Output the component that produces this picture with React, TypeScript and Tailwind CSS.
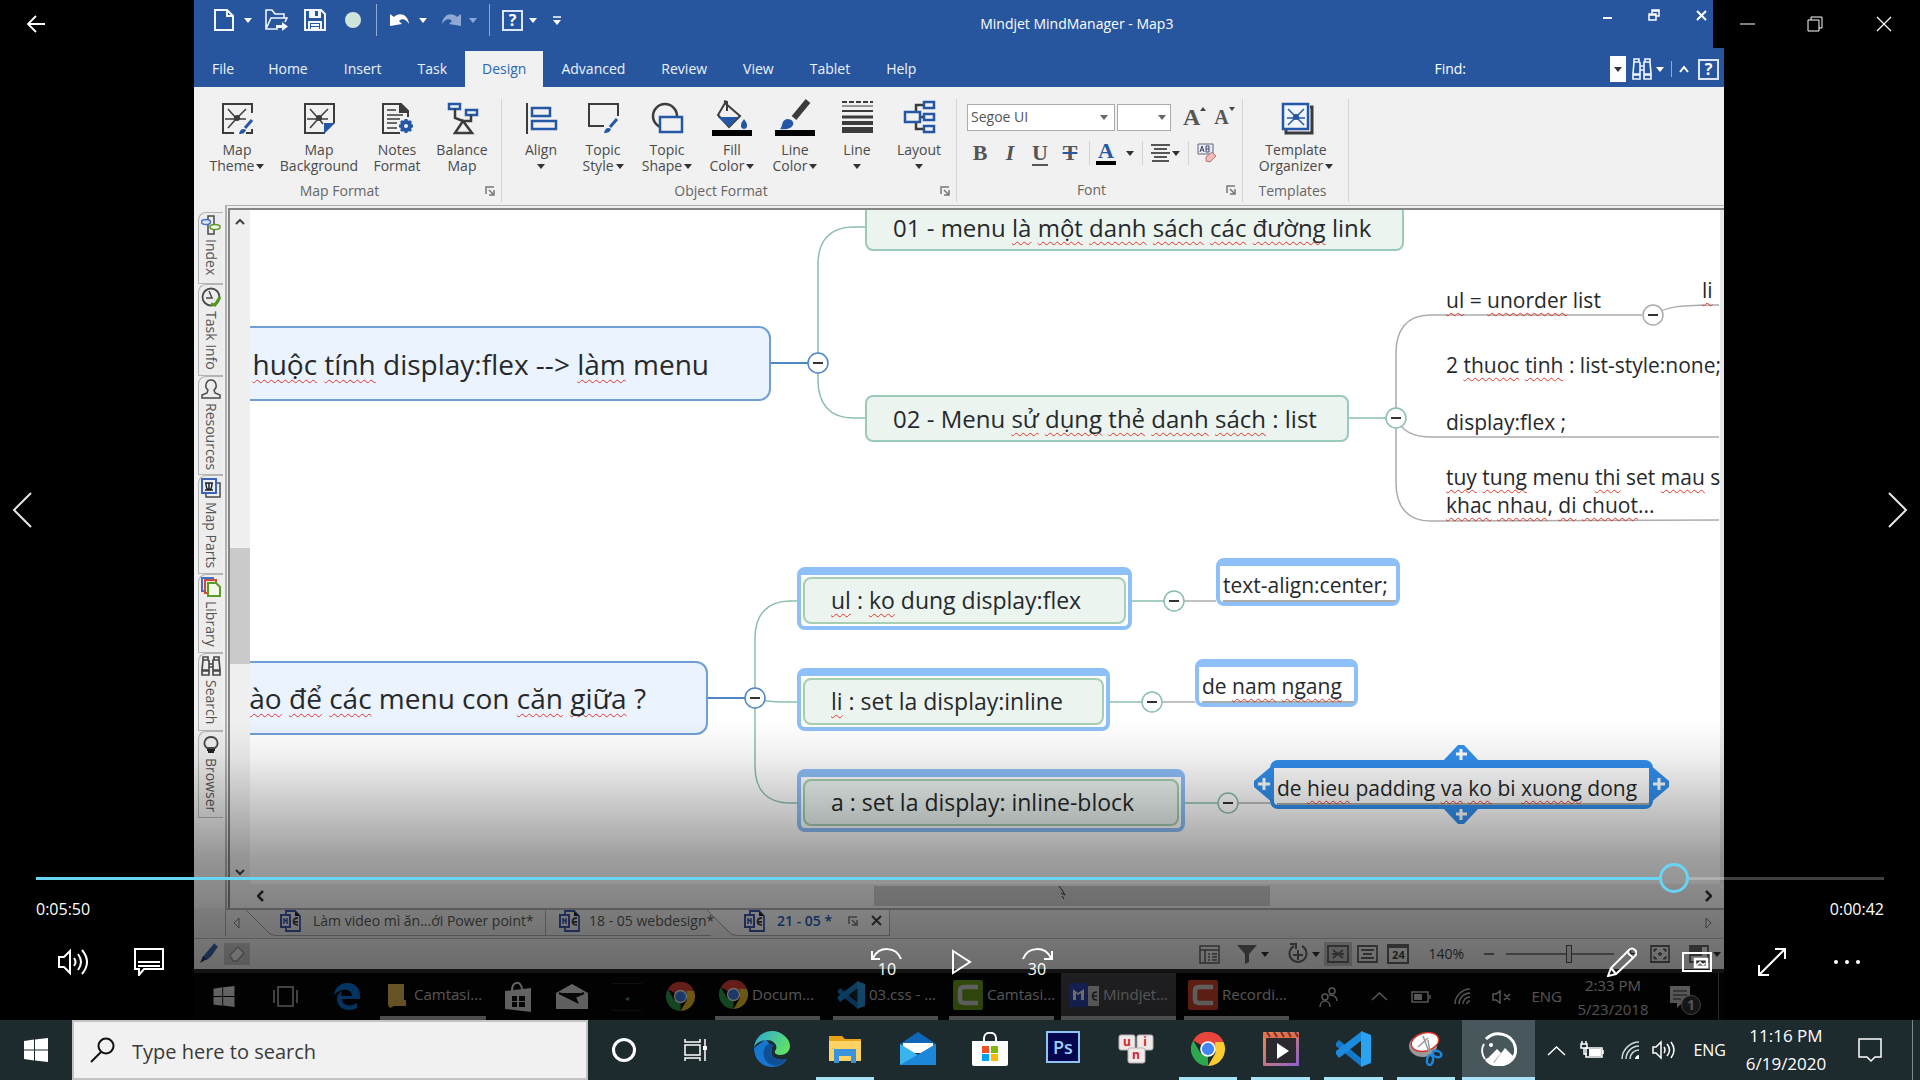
import React from "react";

type Kids = { children?: React.ReactNode };

function Svg({ w, h, box, children, cls = "" }: Kids & { w: number; h: number; box?: string; cls?: string }) {
  return (
    <svg width={w} height={h} viewBox={box ?? `0 0 ${w} ${h}`} fill="none" className={`shrink-0 ${cls}`} aria-hidden="true">
      {children}
    </svg>
  );
}

function Caret({ cls = "text-[#333]" }: { cls?: string }) {
  return (
    <Svg w={8} h={5} cls={cls}>
      <path d="M0 0h8L4 5z" fill="currentColor" />
    </Svg>
  );
}

function Bad({ children }: Kids) {
  return (
    <span className="underline decoration-[#e0352b] decoration-wavy decoration-1 underline-offset-4 [text-decoration-skip-ink:none]">
      {children}
    </span>
  );
}

/* ---------- Title bar and menu ---------- */

const WHITE = "#f2f6ff";

function TitleBar() {
  return (
    <div className="flex h-[51px] pl-3">
      <div className="flex h-10 basis-[51%] items-center">
        <button className="flex w-9 justify-center" aria-label="New">
          <Svg w={20} h={22}>
            <path d="M1 1h12l6 6v14H1zM13 1v6h6" stroke={WHITE} strokeWidth="2" />
          </Svg>
        </button>
        <button className="flex w-3 justify-center" aria-label="New options"><Caret cls="text-white" /></button>
        <button className="ml-[2px] flex w-10 justify-center" aria-label="Open">
          <Svg w={23} h={22}>
            <path d="M13 20H1V1h6l3 4h9v4M1 20L6 9h16l-2 4" stroke={WHITE} strokeWidth="1.6" />
            <path d="M11 16h6v-3l6 4.500-6 4.500v-3h-6z" fill={WHITE} />
          </Svg>
        </button>
        <button className="flex w-[37px] justify-center" aria-label="Save">
          <Svg w={22} h={22}>
            <path d="M1 1h16l4 4v16H1z" stroke={WHITE} strokeWidth="2" />
            <path d="M5 1h12v8H5z" fill={WHITE} />
            <path d="M11 2h3v5h-3z" fill="#26559e" />
            <path d="M5 21v-8h12v8M7 16h8M7 19h8" stroke={WHITE} strokeWidth="2" />
          </Svg>
        </button>
        <button className="flex w-[39px] justify-center" aria-label="Status">
          <span className="size-4 rounded-full bg-[#cfe5dc]" />
        </button>
        <span className="ml-1 h-8 w-px bg-[#8fa9d4]" />
        <button className="ml-3 flex w-5 justify-center" aria-label="Undo">
          <Svg w={19} h={14}>
            <path d="M0 13V1l4 3C9-1 18 1 19 11c-3-5-7-6-10-3l3 3z" fill="#fff" />
          </Svg>
        </button>
        <button className="ml-[6px] flex w-4 justify-center" aria-label="Undo options"><Caret cls="text-white" /></button>
        <button className="ml-[10px] flex w-5 justify-center" aria-label="Redo">
          <Svg w={19} h={14}>
            <path d="M19 13V1l-4 3C10-1 1 1 0 11c3-5 7-6 10-3l-3 3z" fill="#8fa9d4" />
          </Svg>
        </button>
        <button className="ml-1 flex w-4 justify-center" aria-label="Redo options"><Caret cls="text-[#8fa9d4]" /></button>
        <span className="ml-2 h-8 w-px bg-[#8fa9d4]" />
        <button className="ml-3 flex size-[21px] items-center justify-center border-2 border-[#dbe6fa] text-base font-bold text-white" aria-label="Help">?</button>
        <button className="ml-1 flex w-3 justify-center" aria-label="Help options"><Caret cls="text-white" /></button>
        <button className="ml-3 flex w-3 justify-center" aria-label="Customize toolbar">
          <Svg w={8} h={9}><path d="M0 1h8" stroke="#fff" strokeWidth="1.500" /><path d="M0 4h8L4 9z" fill="#fff" /></Svg>
        </button>
      </div>
      <h1 className="flex h-12 items-center text-sm text-white">Mindjet MindManager - Map3</h1>
      <div className="flex h-[30px] flex-1 items-center justify-end gap-9 pr-[17px]">
        <button aria-label="Minimize map window"><Svg w={9} h={10}><path d="M0 8h9" stroke="#fff" strokeWidth="2" /></Svg></button>
        <button aria-label="Restore map window">
          <Svg w={12} h={12}><path d="M4 4V1h7v6H8M1 5h7v6H1zM1 6h7M4 2h7" stroke="#fff" strokeWidth="1.500" /></Svg>
        </button>
        <button aria-label="Close map window"><Svg w={11} h={11}><path d="M1 1l9 9M10 1l-9 9" stroke="#fff" strokeWidth="2" /></Svg></button>
      </div>
    </div>
  );
}

const MENUS = ["Home", "Insert", "Task", "Design", "Advanced", "Review", "View", "Tablet", "Help"];

function MenuBar() {
  return (
    <div className="flex h-9 items-stretch justify-between">
      <nav className="flex">
        <button className="pr-4 pl-[18px] text-sm text-[#eef3fc]">File</button>
        {MENUS.map((m) => (
          <button key={m} className={m === "Design" ? "bg-[#f1f1f1] px-[17px] text-sm text-[#2a66b8]" : "px-[18px] text-sm text-[#eef3fc]"}>
            {m}
          </button>
        ))}
      </nav>
      <div className="flex items-center pr-[5px]">
        <label htmlFor="find" className="text-sm text-white">Find:</label>
        <input id="find" className="h-6 w-36 bg-transparent px-2 text-sm text-white outline-none" />
        <button className="flex h-[26px] w-4 items-center justify-center bg-white" aria-label="Find history"><Caret /></button>
        <button className="ml-[6px]" aria-label="Search map">
          <Svg w={20} h={22}>
            <path d="M2 1h5v3H2zM13 1h5v3h-5zM2 4L1 16h7V4M13 4h-1v12h7L18 4M1 17h7v4H1zM12 17h7v4h-7zM8 8h4M8 12h4" stroke={WHITE} strokeWidth="1.600" />
          </Svg>
        </button>
        <span className="ml-1 flex"><Caret cls="text-white" /></span>
        <span className="mx-[7px] h-4 w-px bg-[#8fa9d4]" />
        <button aria-label="Collapse ribbon"><Svg w={10} h={8}><path d="M1 7l4-5 4 5" stroke="#fff" strokeWidth="2" /></Svg></button>
        <button className="ml-[9px] flex size-[21px] items-center justify-center border-2 border-[#dbe6fa] text-base font-bold text-white" aria-label="Help topics">?</button>
      </div>
    </div>
  );
}

/* ---------- Ribbon ---------- */

const K = "#3c3c3c";
const B = "#2557a7";

function RibbonIcon({ name }: { name: string }) {
  return (
    <Svg w={42} h={38} box="0 0 42 38">
      {name === "theme" && (
        <g transform="translate(6 4)">
          <path d="M30 10V1H1v29h11M24 30h6v-4" stroke={K} strokeWidth="2" />
          <path d="M6 6l8 9M24 6l-9 9M6 25l8-9M3 16h11M17 16h7" stroke={K} strokeWidth="1.500" />
          <circle cx="15" cy="15" r="3" fill={K} />
          <path d="M30 17l-7 8" stroke={B} strokeWidth="3" />
          <path d="M17 31c1-5 4-6 7-4-1 3-3 4-7 4z" fill={B} />
        </g>
      )}
      {name === "background" && (
        <g transform="translate(6 4)">
          <path d="M30 20V1H1v29h20" stroke={K} strokeWidth="2" />
          <path d="M6 6l8 9M24 6l-9 9M6 25l8-9M3 16h11M17 16h7M16 17l3 4" stroke={K} strokeWidth="1.500" />
          <circle cx="15" cy="15" r="3" fill={K} />
          <path d="M20 20h11L20 31z" fill={B} />
        </g>
      )}
      {name === "notes" && (
        <g transform="translate(6 4)">
          <path d="M18 30H1V1h18l7 7v6M18 1v8h8" stroke={K} strokeWidth="2" />
          <path d="M19 1l7 8h-7z" fill={K} />
          <path d="M5 7h9M5 12h16M5 16h13M5 20h10M5 25h10" stroke={K} strokeWidth="1.500" />
          <circle cx="24" cy="23" r="4" stroke={B} strokeWidth="4" />
          <path d="M24 16v3M24 27v3M17 23h3M28 23h3M19 18l2 2M27 26l2 2M29 18l-2 2M19 28l2-2" stroke={B} strokeWidth="3" />
        </g>
      )}
      {name === "balance" && (
        <g transform="translate(6 4)">
          <path d="M2 1h11v5H2zM19 7h11v5H19z" stroke={B} strokeWidth="2.500" />
          <path d="M8 6v9l8 3M24 12v6h-8M16 18L8 30h17z" stroke={K} strokeWidth="2.500" />
        </g>
      )}
      {name === "align" && (
        <g transform="translate(6 4)">
          <path d="M1 0v31" stroke={K} strokeWidth="2" />
          <path d="M6 5h18v8H6zM6 18h24v8H6z" stroke={B} strokeWidth="2.500" />
        </g>
      )}
      {name === "style" && (
        <g transform="translate(6 4)">
          <path d="M30 13V1H1v22h15" stroke={K} strokeWidth="2" />
          <path d="M29 16l-7 8" stroke={B} strokeWidth="3" />
          <path d="M16 30c1-5 4-6 7-4-1 3-3 4-7 4z" fill={B} />
        </g>
      )}
      {name === "shape" && (
        <g transform="translate(6 3)">
          <circle cx="13" cy="14" r="12" stroke={K} strokeWidth="2.500" />
          <path d="M8 15h22v15H8z" stroke={B} strokeWidth="2.500" fill="#f1f1f1" />
        </g>
      )}
      {name === "fill" && (
        <g>
          <path d="M13 2l3 1v9M14 4l15 13-11 11L7 16z" stroke={K} strokeWidth="2" />
          <path d="M7 18h20l-9 10z" fill={B} />
          <path d="M33 20c5 6 3 10 0 10s-5-4 0-10z" fill={B} />
          <path d="M1 31h40v6H1z" fill="#000" />
        </g>
      )}
      {name === "brush" && (
        <g>
          <path d="M34 2L20 19" stroke={K} strokeWidth="6" />
          <path d="M6 30c3-2 1-9 7-10 5 0 7 3 6 6-2 4-8 5-13 4z" fill={B} />
          <path d="M1 31h40v6H1z" fill="#000" />
        </g>
      )}
      {name === "line" && (
        <g stroke={K}>
          <path d="M6 3h31" strokeWidth="2" strokeDasharray="5 2" />
          <path d="M6 7h31" strokeWidth="1" />
          <path d="M6 12h31" strokeWidth="2" />
          <path d="M6 18h31" strokeWidth="3" />
          <path d="M6 24h31" strokeWidth="4" />
          <path d="M6 31h31" strokeWidth="6" />
        </g>
      )}
      {name === "layout" && (
        <g transform="translate(6 2)">
          <path d="M12 11V4h7M16 16h4M12 21v7h7" stroke={K} strokeWidth="2.500" />
          <path d="M1 11h15v10H1zM20 1h10v6H20zM20 13h10v6H20zM20 25h10v6H20z" stroke={B} strokeWidth="2.500" />
        </g>
      )}
      {name === "template" && (
        <g transform="translate(6 3)">
          <path d="M5 28v3h26V5h-2" stroke={K} strokeWidth="3" />
          <path d="M2 2h25v25H2z" stroke={B} strokeWidth="2.500" fill="#f1f6ff" />
          <path d="M7 7l16 16M23 7L7 23M6 16h18" stroke={B} strokeWidth="1.500" />
          <circle cx="15" cy="15" r="3" fill={B} />
        </g>
      )}
    </Svg>
  );
}

function Big({ icon, a, b, caret, cls }: { icon: string; a: string; b?: string; caret?: boolean; cls: string }) {
  return (
    <button className={`flex flex-col items-center text-sm leading-4 text-[#4a4a4a] ${cls}`}>
      <RibbonIcon name={icon} />
      <span className="mt-1 leading-[17px]">{a}</span>
      <span className="flex h-4 items-center gap-[2px] whitespace-nowrap">
        {b}
        {caret && <Caret />}
      </span>
    </button>
  );
}

function Launcher() {
  return (
    <Svg w={10} h={10}>
      <path d="M1 8V1h8M4 4l5 5M9 4v5H4" stroke="#777" strokeWidth="1.500" />
    </Svg>
  );
}

function Group({ title, launch, cls, children }: Kids & { title: string; launch?: boolean; cls: string }) {
  return (
    <section className={`flex flex-col border-r border-[#d4d4d4] ${cls}`}>
      <div className="flex h-[78px] items-start pl-2">{children}</div>
      <div className="mt-[5px] flex h-6 items-center pr-[6px]">
        <h2 className="flex-1 text-center text-sm text-[#666]">{title}</h2>
        {launch && <button aria-label={`${title} options`}><Launcher /></button>}
      </div>
    </section>
  );
}

function Ribbon() {
  const glyph = "flex w-[30px] justify-center font-[Liberation_Serif] text-[22px] leading-6 font-bold text-[#555]";
  return (
    <div className="flex h-[117px] bg-[#f1f1f1] pt-3 pb-[2px] whitespace-nowrap">
      <Group title="Map Format" launch cls="w-[308px]">
        <Big icon="theme" a="Map" b="Theme" caret cls="w-[70px]" />
        <Big icon="background" a="Map" b="Background" cls="w-[94px]" />
        <Big icon="notes" a="Notes" b="Format" cls="w-[62px]" />
        <Big icon="balance" a="Balance" b="Map" cls="w-[68px]" />
      </Group>
      <Group title="Object Format" launch cls="w-[455px]">
        <Big icon="align" a="Align" caret cls="w-[62px]" />
        <Big icon="style" a="Topic" b="Style" caret cls="w-[62px]" />
        <Big icon="shape" a="Topic" b="Shape" caret cls="w-[66px]" />
        <Big icon="fill" a="Fill" b="Color" caret cls="w-[64px]" />
        <Big icon="brush" a="Line" b="Color" caret cls="w-[62px]" />
        <Big icon="line" a="Line" caret cls="w-[62px]" />
        <Big icon="layout" a="Layout" caret cls="w-[62px]" />
      </Group>
      <Group title="Font" launch cls="w-[286px]">
        <div className="flex flex-1 flex-col pt-1">
          <div className="flex items-center">
            <div className="ml-[2px] flex h-[27px] w-[148px] items-center justify-between border border-[#ababab] bg-white pr-[6px]">
              <input aria-label="Font name" defaultValue="Segoe UI" className="w-28 pl-[3px] text-sm text-[#555] outline-none" />
              <Caret cls="text-[#666]" />
            </div>
            <div className="ml-[2px] flex h-[27px] w-[54px] items-center justify-end border border-[#ababab] bg-white pr-1">
              <input aria-label="Font size" className="w-8 text-sm outline-none" />
              <Caret cls="text-[#666]" />
            </div>
            <button className="ml-3 flex items-start font-[Liberation_Serif] text-[24px] leading-7 font-bold text-[#555]" aria-label="Grow font">
              A<Svg w={6} h={4} cls="mt-1"><path d="M0 4h6L3 0z" fill="#444" /></Svg>
            </button>
            <button className="ml-2 flex items-start font-[Liberation_Serif] text-[20px] leading-7 font-bold text-[#555]" aria-label="Shrink font">
              A<Svg w={6} h={4} cls="mt-1"><path d="M0 0h6L3 4z" fill="#444" /></Svg>
            </button>
          </div>
          <div className="mt-2 flex h-7 items-center">
            <button className={glyph} aria-label="Bold">B</button>
            <button className={`${glyph} italic`} aria-label="Italic">I</button>
            <button className={`${glyph} underline underline-offset-4`} aria-label="Underline">U</button>
            <button className={`${glyph} line-through decoration-[#2557a7] decoration-2`} aria-label="Strikethrough">T</button>
            <span className="mx-1 h-6 w-px bg-[#d4d4d4]" />
            <button className="flex w-6 flex-col items-center font-[Liberation_Serif] text-[22px] leading-5 font-bold text-[#2557a7]" aria-label="Font color">
              A<span className="h-1 w-5 bg-black" />
            </button>
            <span className="ml-2 flex"><Caret /></span>
            <span className="mr-2 ml-2 h-6 w-px bg-[#d4d4d4]" />
            <button className="flex items-center gap-[2px]" aria-label="Alignment">
              <Svg w={19} h={18}><path d="M0 1h19M3 5h13M0 9h19M3 13h13M1 17h17" stroke="#555" strokeWidth="2" /></Svg>
              <Caret />
            </button>
            <span className="mx-2 h-6 w-px bg-[#d4d4d4]" />
            <button aria-label="Clear formatting">
              <Svg w={20} h={20}>
                <path d="M1 1h15v10H1z" stroke="#667" strokeWidth="1" fill="#e8edf5" />
                <path d="M3 9l2-6 2 6M4 7h3M9 3v6h3V3zM9 6h3" stroke="#446" strokeWidth="1" />
                <path d="M9 14l6-5 4 4-6 6-4-1z" fill="#f3b9b9" stroke="#a77" />
              </Svg>
            </button>
          </div>
        </div>
      </Group>
      <Group title="Templates" cls="w-[106px]">
        <Big icon="template" a="Template" b="Organizer" caret cls="w-[90px]" />
      </Group>
    </div>
  );
}

/* ---------- Side tabs ---------- */

function SideIcon({ name }: { name: string }) {
  const s = "#4a4a4a";
  return (
    <Svg w={20} h={20}>
      {name === "Index" && (
        <g strokeWidth="1.500">
          <path d="M7 1h6v18H7z" stroke={s} />
          <ellipse cx="5" cy="7" rx="4.500" ry="2.500" stroke="#4a72c8" fill="#dbe6fa" />
          <ellipse cx="14" cy="12" rx="5" ry="2.500" stroke="#5b9a28" fill="#eef7e4" />
        </g>
      )}
      {name === "Task Info" && (
        <g>
          <circle cx="10" cy="10" r="8.500" stroke={s} strokeWidth="1.800" />
          <path d="M5 11h6L8 4" stroke={s} strokeWidth="1.500" />
          <path d="M10 17l4 1 5-8" stroke="#4f9a1c" strokeWidth="3" />
        </g>
      )}
      {name === "Resources" && (
        <path d="M7 11C3 8 5 1 10 1s7 7 3 10l1 3 5 2v3H1v-3l5-2z" stroke={s} strokeWidth="1.500" />
      )}
      {name === "Map Parts" && (
        <g>
          <path d="M5 5h14v14H5z" stroke={s} strokeWidth="1.500" />
          <path d="M1 1h14v14H1z" stroke="#3d63b8" strokeWidth="2" fill="#e9effb" />
          <path d="M4 5h8M8 5v7M5 5c0 9 6 9 6 0M4 12h8" stroke="#222" strokeWidth="1.500" />
        </g>
      )}
      {name === "Library" && (
        <g strokeWidth="2">
          <path d="M1 1h11v13H1z" stroke="#3d72c8" />
          <path d="M4 3h11v13H4z" stroke="#d04a3a" fill="#fbe9d8" />
          <path d="M7 6h8l4 4v9H7z" stroke="#5b9a28" fill="#f3faea" />
        </g>
      )}
      {name === "Search" && (
        <path d="M2 1h5v3H2zM13 1h5v3h-5zM2 4L1 14h7V4M13 4h-1v10h7L18 4M1 15h7v4H1zM12 15h7v4h-7zM8 8h4M8 11h4" stroke={s} strokeWidth="1.700" />
      )}
      {name === "Browser" && (
        <g>
          <path d="M6 14C1 10 4 3 10 3s9 7 4 11z" stroke={s} strokeWidth="1.800" />
          <path d="M6 16h8M7 18h6" stroke="#222" strokeWidth="2" />
        </g>
      )}
    </Svg>
  );
}

const SIDE_TABS: [string, string][] = [
  ["Index", "h-[72px]"],
  ["Task Info", "h-[92px]"],
  ["Resources", "h-[99px]"],
  ["Map Parts", "h-[99px]"],
  ["Library", "h-[79px]"],
  ["Search", "h-[78px]"],
  ["Browser", "h-[87px]"],
];

function SideTabs() {
  return (
    <div className="flex w-[31px] flex-col bg-[#f0f0f0] pt-2 pl-1">
      {SIDE_TABS.map(([name, h]) => (
        <button
          key={name}
          className={`flex w-[25px] flex-col items-center gap-1 rounded-tl-lg border border-r-0 border-[#b4b4b4] bg-[#ededed] pt-[2px] text-sm leading-5 text-[#555] ${h}`}
        >
          <SideIcon name={name} />
          <span className="whitespace-nowrap [writing-mode:vertical-rl]">{name}</span>
        </button>
      ))}
    </div>
  );
}

/* ---------- Mind map ---------- */

function Toggle({ x, y, c }: { x: number; y: number; c: string }) {
  return (
    <g>
      <circle cx={x} cy={y} r="10" fill="#fff" stroke={c} strokeWidth="1.500" />
      <path d={`M${x - 5} ${y}h10`} stroke="#333" strokeWidth="2" />
    </g>
  );
}

const GREEN = "#8abfaa";
const BLUE = "#4f86c6";
const GREY = "#a9adab";

function Links() {
  return (
    <svg className="absolute top-0 left-0" width="1470" height="674" viewBox="250 210 1470 674" fill="none" strokeWidth="1.500" aria-hidden="true">
      <path d="M771 363h47M708 698h47" stroke={BLUE} strokeWidth="2" />
      <path d="M865 227h-12c-24 0-35 15-35 37v116c0 24 12 38 35 38h12M1349 418h47" stroke={GREEN} />
      <path d="M797 601h-7c-24 0-35 15-35 37v128c0 24 12 37 35 37h7M755 698c12 4 20 4 42 4M1132 601h42M1110 702h42M1185 803h42" stroke={GREEN} />
      <path d="M1174 601h42M1152 702h43M1228 803h42" stroke={GREY} />
      <path d="M1642 315h-212c-24 0-34 16-34 38v130c0 24 12 38 34 38h14l275-1M1396 418c6 13 16 19 36 19h287M1653 315c14-9 30-10 66-10" stroke={GREY} />
      <Toggle x={818} y={363} c={BLUE} />
      <Toggle x={755} y={698} c={BLUE} />
      <Toggle x={1396} y={418} c={GREEN} />
      <Toggle x={1653} y={315} c={GREY} />
      <Toggle x={1174} y={601} c={GREEN} />
      <Toggle x={1152} y={702} c={GREEN} />
      <Toggle x={1228} y={803} c={GREEN} />
      <g fill="#3290ee">
        <path d="M1442 762l16-17h6l16 17zM1442 807l16 17h6l16-17zM1274 764l-20 17v6l20 17zM1649 764l20 17v6l-20 17z" />
      </g>
      <path d="M1461 749v11M1456 754h11M1461 809v11M1456 814h11M1264 778v12M1258 784h12M1659 778v12M1653 784h12" stroke="#fff" strokeWidth="3" />
    </svg>
  );
}

function MapCanvas() {
  const big = "absolute flex items-center border-2 border-[#6f9fd4] bg-[#ebf3fe] text-[28px]";
  const topic = "absolute flex items-center rounded-lg border-2 border-[#9acbb7] bg-[#ecf4f0] pl-[26px] text-[24px]";
  const picked = "absolute rounded-lg border-x-4 border-t-8 border-b-4 border-[#8dbff8] bg-white p-[2px]";
  const inner = "flex h-full items-center rounded-lg border-2 border-[#a5ceb2] bg-[#ecf4f0] pl-[26px] text-[23px]";
  const leaf = "absolute text-[21px] leading-7";
  const pickedLeaf = "absolute flex items-end rounded-lg border-x-4 border-t-8 border-b-4 bg-white pl-[3px] text-[21px] leading-[30px]";
  return (
    <div className="relative flex-1 overflow-hidden bg-white whitespace-nowrap text-[#26292b]">
      <Links />
      <div className={`${big} top-[116px] -left-3 h-[75px] w-[533px] justify-end rounded-xl pr-[60px]`}>
        <span><Bad>huộc</Bad> <Bad>tính</Bad> display:flex --&gt; <Bad>làm</Bad> menu</span>
      </div>
      <div className={`${big} top-[451px] -left-3 h-[74px] w-[470px] justify-end rounded-xl pr-[60px]`}>
        <span><Bad>ào</Bad> <Bad>để</Bad> <Bad>các</Bad> menu con <Bad>căn</Bad> <Bad>giữa</Bad> ?</span>
      </div>
      <div className={`${topic} -top-[6px] left-[615px] h-[47px] w-[539px]`}>
        <span>01 - menu <Bad>là</Bad> <Bad>một</Bad> <Bad>danh</Bad> <Bad>sách</Bad> <Bad>các</Bad> <Bad>đường</Bad> link</span>
      </div>
      <div className={`${topic} top-[185px] left-[615px] h-[47px] w-[484px]`}>
        <span>02 - Menu <Bad>sử</Bad> <Bad>dụng</Bad> <Bad>thẻ</Bad> <Bad>danh</Bad> <Bad>sách</Bad> : list</span>
      </div>
      <div className={`${leaf} top-[76px] left-[1196px]`}><Bad>ul</Bad> = <Bad>unorder</Bad> list</div>
      <div className={`${leaf} top-[66px] left-[1452px]`}><Bad>li</Bad></div>
      <div className={`${leaf} top-[141px] left-[1196px]`}>2 <Bad>thuoc</Bad> <Bad>tinh</Bad> : list-style:none;</div>
      <div className={`${leaf} top-[198px] left-[1196px]`}>display:flex ;</div>
      <div className={`${leaf} top-[253px] left-[1196px]`}>
        <Bad>tuy</Bad> <Bad>tung</Bad> menu <Bad>thi</Bad> set <Bad>mau</Bad> s<br />
        <Bad>khac</Bad> <Bad>nhau</Bad>, <Bad>di</Bad> <Bad>chuot</Bad>...
      </div>
      <div className={`${picked} top-[357px] left-[547px] h-[63px] w-[335px]`}>
        <div className={inner}><span><Bad>ul</Bad> : <Bad>ko</Bad> dung display:flex</span></div>
      </div>
      <div className={`${picked} top-[458px] left-[547px] h-[63px] w-[313px]`}>
        <div className={inner}><span><Bad>li</Bad> : set la display:inline</span></div>
      </div>
      <div className={`${picked} top-[559px] left-[547px] h-[63px] w-[388px]`}>
        <div className={inner}>a : set la display: inline-block</div>
      </div>
      <div className={`${pickedLeaf} top-[348px] left-[966px] h-[48px] w-[184px] border-[#8dbff8]`}>
        <span className="w-full border-b-2 border-[#a9adab]">text-align:center;</span>
      </div>
      <div className={`${pickedLeaf} top-[449px] left-[945px] h-[48px] w-[163px] border-[#8dbff8]`}>
        <span className="w-full border-b-2 border-[#a9adab]">de <Bad>nam</Bad> <Bad>ngang</Bad></span>
      </div>
      <div className={`${pickedLeaf} top-[550px] left-[1020px] h-[49px] w-[383px] border-[#3290ee]`}>
        <span className="w-full border-b-2 border-[#a9adab]">de <Bad>hieu</Bad> padding <Bad>va</Bad> <Bad>ko</Bad> bi <Bad>xuong</Bad> dong</span>
      </div>
    </div>
  );
}

function Workspace() {
  return (
    <div className="flex min-h-0 flex-1 bg-[#f0f0f0]">
      <SideTabs />
      <div className="mt-px flex flex-1 flex-col border-t border-l-2 border-[#b0b0b0] pt-[2px] pl-px">
        <div className="flex flex-1 flex-col border-t-2 border-l-2 border-[#858585]">
          <div className="flex flex-1">
            <div className="flex w-5 flex-col items-center bg-[#f0f0f0] pt-2 pb-2">
              <Svg w={10} h={7}><path d="M1 6l4-4 4 4" stroke="#444" strokeWidth="2" /></Svg>
              <div className="mt-[323px] h-[116px] w-5 bg-[#cacaca]" />
              <Svg w={10} h={7} cls="mt-auto"><path d="M1 1l4 4 4-4" stroke="#444" strokeWidth="2" /></Svg>
            </div>
            <MapCanvas />
            <div className="flex w-1 flex-col justify-end bg-[#e8e8e8]" />
          </div>
          <div className="flex h-6 items-center bg-[#f0f0f0] pr-3 pl-[27px]">
            <Svg w={7} h={12}><path d="M6 1L1 6l5 5" stroke="#333" strokeWidth="2.500" /></Svg>
            <div className="ml-[610px] flex h-5 w-[396px] items-start bg-[#c8c8c8] pl-[184px]">
              <Svg w={8} h={14}><path d="M1 0l3 4 3 5-4-2M4 10l2 3" stroke="#333" /></Svg>
            </div>
            <Svg w={7} h={12} cls="ml-auto"><path d="M1 1l5 5-5 5" stroke="#333" strokeWidth="2.500" /></Svg>
          </div>
        </div>
      </div>
    </div>
  );
}

/* ---------- Document tabs and status bar ---------- */

function DocIcon() {
  return (
    <Svg w={21} h={22}>
      <path d="M6 4V1h9l5 5v15H6v-3" stroke="#3a55a8" strokeWidth="1.800" />
      <path d="M15 1l5 5h-5z" fill="#222" />
      <path d="M1 5h9v12H1z" stroke="#3a55a8" strokeWidth="2" />
      <path d="M4 8v6M7 8v6M4 9l3 3" stroke="#3a55a8" strokeWidth="1.500" />
      <path d="M18 8c-6 0-6 7 0 7M13 12h5" stroke="#444" strokeWidth="1.800" />
    </Svg>
  );
}

function DocTabs() {
  return (
    <div className="flex h-[30px] bg-[#e6e6e6] pl-[31px]">
      <div className="mb-[2px] flex flex-1 items-stretch border-t-2 border-l border-[#a8a8a8]">
        <button className="flex w-5 items-center justify-center" aria-label="Previous tabs"><Svg w={7} h={12}><path d="M6 1L1 6l5 5z" stroke="#777" /></Svg></button>
        <Svg w={28} h={26}><path d="M0 0l22 22q2 3 6 3" stroke="#999" /></Svg>
        <button className="flex w-[272px] items-center gap-3 border-r border-b border-[#a8a8a8] pb-1 pl-[6px] text-sm font-medium whitespace-nowrap text-[#555]">
          <DocIcon />Làm video mì ăn...ới Power point*
        </button>
        <button className="flex w-[165px] items-center gap-[9px] border-b border-[#a8a8a8] pb-1 pl-[13px] text-sm font-medium whitespace-nowrap text-[#555]">
          <DocIcon />18 - 05 webdesign*
        </button>
        <Svg w={28} h={26} cls="-ml-1"><path d="M0 0l22 22q2 3 6 3V0z" fill="#f2f2f2" /><path d="M0 0l22 22q2 3 6 3" stroke="#999" /></Svg>
        <div className="flex w-[155px] items-center border-r border-b border-[#a8a8a8] bg-[#f2f2f2] pb-1 pl-[9px] text-sm font-semibold text-[#1c5cb0]">
          <DocIcon />
          <button className="mr-4 ml-3">21 - 05 *</button>
          <Launcher />
          <button className="ml-[13px]" aria-label="Close document"><Svg w={11} h={11}><path d="M1 1l9 9M10 1l-9 9" stroke="#444" strokeWidth="2" /></Svg></button>
        </div>
        <div className="flex flex-1 items-center justify-end pr-3"><Svg w={7} h={12}><path d="M1 1l5 5-5 5z" stroke="#777" /></Svg></div>
      </div>
    </div>
  );
}

function StatusBar() {
  const s = "#666";
  return (
    <div className="flex h-[31px] items-center border-t border-[#b8b8b8] bg-[#efefef] pl-[5px] text-sm text-[#444]">
      <Svg w={19} h={22}><path d="M17 2l-7 10-4 3z" stroke="#3a62a8" strokeWidth="5" /><path d="M1 20l3-7 4 3z" fill="#223a6a" /></Svg>
      <span className="ml-[6px] flex h-[22px] w-[26px] items-center justify-center bg-[#c8c8c8]">
        <Svg w={20} h={18}><path d="M3 10l8-8 6 6-7 8H6z" fill="#efefef" stroke="#999" strokeWidth="1.500" /></Svg>
      </span>
      <div className="ml-auto flex items-center pr-[3px]">
        <Svg w={21} h={19}><path d="M1 1h19v17H1zM1 5h19M6 5v13M9 9h2M13 9h5M9 12h2M13 12h5M9 15h2M13 15h5" stroke={s} strokeWidth="1.500" /></Svg>
        <span className="ml-[17px] flex items-center gap-1"><Svg w={20} h={19}><path d="M0 0h20l-8 9v8l-4 2V9z" fill={s} /></Svg><Caret /></span>
        <span className="ml-[19px] flex items-center gap-1"><Svg w={20} h={22}><path d="M6 3a8.500 8.500 0 1 0 8 0M10 7v10M5 12h10M2 1h6v5" stroke={s} strokeWidth="2" /></Svg><Caret /></span>
        <span className="ml-1 flex h-6 w-7 items-center justify-center bg-[#c4c4c4]"><Svg w={22} h={18}><path d="M1 1h20v16H1zM6 5l10 8M16 5L6 13M5 9h12" stroke={s} strokeWidth="1.800" /></Svg></span>
        <Svg w={21} h={18} cls="ml-[5px]"><path d="M1 1h19v16H1zM4 5h13M6 9h9M4 13h13" stroke={s} strokeWidth="1.800" /></Svg>
        <span className="ml-[9px] flex h-5 w-[22px] items-end justify-center border-2 border-t-4 border-[#666] text-[11px] leading-[14px] font-bold">24</span>
        <span className="ml-[19px]">140%</span>
        <span className="ml-5 h-[2px] w-[10px] bg-[#777]" />
        <input
          type="range"
          aria-label="Zoom"
          defaultValue={59}
          className="ml-3 h-5 w-[108px] appearance-none bg-[linear-gradient(#888,#888)] bg-[length:100%_2px] bg-center bg-no-repeat [&::-webkit-slider-thumb]:h-[18px] [&::-webkit-slider-thumb]:w-[6px] [&::-webkit-slider-thumb]:appearance-none [&::-webkit-slider-thumb]:border [&::-webkit-slider-thumb]:border-[#555] [&::-webkit-slider-thumb]:bg-[#ddd]"
        />
        <span className="ml-3 w-4 text-base">+</span>
        <Svg w={20} h={18} cls="ml-2"><path d="M1 1h18v16H1zM8 9h4M10 7v4" stroke={s} strokeWidth="1.800" /><path d="M4 4h3L4 7zM16 4h-3l3 3zM4 14h3l-3-3zM16 14h-3l3-3z" fill={s} stroke={s} /></Svg>
        <span className="ml-[19px] flex items-center gap-1"><Svg w={20} h={18}><path d="M1 1h18v16H1z" stroke={s} strokeWidth="1.800" /><path d="M1 1h12v10H1z" fill={s} /></Svg><Caret /></span>
      </div>
    </div>
  );
}

/* ---------- Shared app logos ---------- */

function Windows({ w, h, c }: { w: number; h: number; c: string }) {
  return <Svg w={w} h={h} box="0 0 24 24"><path d="M0 3l10-1.500V11.500H0zM11 1.400L24 0v11.500H11zM0 12.500h10v10L0 21zM11 12.500h13V24l-13-1.600z" fill={c} /></Svg>;
}

function Chrome({ w, h }: { w: number; h: number }) {
  return (
    <Svg w={w} h={h} box="0 0 48 48">
      <path d="M24 24L3.200 12A24 24 0 0 1 44.800 12z" fill="#e8453c" />
      <path d="M24 24V48A24 24 0 0 1 3.200 12l10.400 18z" fill="#2ea84f" />
      <path d="M24 48l10.400-18L34 14h11.900A24 24 0 0 1 24 48z" fill="#fccb2f" />
      <path d="M3.200 12A24 24 0 0 1 45.900 14H24z" fill="#e8453c" />
      <circle cx="24" cy="24" r="11" fill="#fff" />
      <circle cx="24" cy="24" r="8.700" fill="#4285f4" />
    </Svg>
  );
}

function VsCode({ w, h }: { w: number; h: number }) {
  return (
    <Svg w={w} h={h} box="0 0 36 36">
      <path d="M1 12l3-3 23 19v8L1 15z" fill="#1479c9" />
      <path d="M1 23l3 4L27 9V0L1 20z" fill="#1b8be0" />
      <path d="M26 0l10 4v28l-10 4z" fill="#2ba3ee" />
      <path d="M26 11v14l-9-7z" fill="#1c2a2e" />
    </Svg>
  );
}

/* ---------- Recorded desktop's taskbar ---------- */

function RunningApp({ icon, text, cls = "" }: { icon: React.ReactNode; text: string; cls?: string }) {
  return (
    <button className={`flex h-full items-center gap-1 border-b-4 border-[#c0c0c0] text-[15px] whitespace-nowrap text-[#c8c8c8] ${cls}`}>
      {icon}
      {text}
    </button>
  );
}

function CamtasiaLogo({ c }: { c: string }) {
  return (
    <Svg w={30} h={30}>
      <rect width="30" height="30" rx="2" fill={c} />
      <path d="M25 7H11q-4 0-4 4v8q0 4 4 4h14" stroke="#ddd" strokeWidth="4.500" />
    </Svg>
  );
}

function RecordedTaskbar() {
  return (
    <div className="flex h-[51px] items-center border-t-4 border-[#2a2a2a] bg-[#040406] pl-[19px]">
      <button className="flex w-[22px]" aria-label="Recorded start"><Windows w={22} h={21} c="#e6e6e6" /></button>
      <button className="ml-[38px]" aria-label="Recorded task view"><Svg w={25} h={21}><path d="M5 1h15v19H5zM1 4v13M24 4v13" stroke="#ccc" strokeWidth="1.500" /></Svg></button>
      <button className="ml-[35px]" aria-label="Edge">
        <Svg w={27} h={27}><path d="M1 12C2 4 8 0 14 0c9 0 13 6 13 12v4H9c0 7 9 8 15 4v5C14 30 4 25 4 16c0-4 3-7 6-8-2 2-2 3-2 5h11c0-8-12-8-18-1z" fill="#0a7be0" /></Svg>
      </button>
      <RunningApp cls="ml-5 w-[106px] pl-2" icon={<Svg w={18} h={26} cls="mr-1"><path d="M0 2h16v16h2v6H6l-4 2-2-3z" fill="#f0c458" /></Svg>} text="Camtasi..." />
      <button className="ml-[18px]" aria-label="Store">
        <Svg w={28} h={30}><path d="M1 9l26-3v24L1 27z" fill="#e6e6e6" /><path d="M8 9c0-10 9-11 10-2" stroke="#e6e6e6" strokeWidth="2" /><path d="M8 14h5v5H8zM15 14h6v5h-6zM8 20h5v5H8zM15 20h6v5h-6z" fill="#111" /></Svg>
      </button>
      <button className="ml-6" aria-label="Mail">
        <Svg w={32} h={26}><path d="M0 9L16 0l16 9v16H0z" fill="#e6e6e6" /><path d="M3 9l18 9-2-5 9-4" stroke="#111" strokeWidth="2" fill="#111" /></Svg>
      </button>
      <span className="ml-6 h-7 w-[30px] border-y border-[#222] pt-2 text-center text-[8px] leading-3 text-[#6a9a6a]">◂</span>
      <button className="ml-6" aria-label="Chrome"><Chrome w={29} h={29} /></button>
      <RunningApp cls="ml-5 w-[105px] pl-1" icon={<Chrome w={29} h={29} />} text="Docum..." />
      <RunningApp cls="ml-[13px] w-[105px] pl-1" icon={<VsCode w={28} h={30} />} text="03.css - ..." />
      <RunningApp cls="ml-[11px] w-[105px] pl-1" icon={<CamtasiaLogo c="#6ea21c" />} text="Camtasi..." />
      <RunningApp
        cls="ml-[7px] w-[115px] bg-[#45454c] pl-2"
        icon={<Svg w={30} h={28}><path d="M0 2h19v24H0z" fill="#3048b8" /><path d="M19 5h11v20H19z" fill="#ccc" /><path d="M4 8v11h3V12l2 2 3-2v7h3V8l-6 4z" fill="#fff" /><path d="M28 11c-6 0-6 8 0 8M23 15h5" stroke="#333" strokeWidth="1.500" /></Svg>}
        text="Mindjet..."
      />
      <RunningApp cls="ml-2 w-[105px] pl-1" icon={<CamtasiaLogo c="#d8452c" />} text="Recordi..." />
      <div className="ml-auto flex items-center text-[15px] text-[#c8c8c8]">
        <Svg w={19} h={20}><circle cx="13" cy="4" r="3" stroke="#ccc" strokeWidth="1.500" /><circle cx="6" cy="10" r="3" stroke="#ccc" strokeWidth="1.500" /><path d="M1 20c0-8 10-8 10 0M10 8c6 0 8 3 8 6" stroke="#ccc" strokeWidth="1.500" /></Svg>
        <Svg w={17} h={9} cls="ml-[33px]"><path d="M1 8l7.500-7L16 8" stroke="#ccc" strokeWidth="1.500" /></Svg>
        <Svg w={20} h={12} cls="ml-[23px]"><path d="M1 1h16v10H1zM19 4v4" stroke="#ccc" strokeWidth="1.500" /><path d="M3 3h8v6H3z" fill="#ccc" /></Svg>
        <Svg w={17} h={17} cls="ml-[23px]"><path d="M1 16C1 8 8 1 16 1M5 16C5 10 10 5 16 5M9 16c0-4 3-7 7-7M13 16c0-2 1-3 3-3" stroke="#ccc" strokeWidth="1.500" /></Svg>
        <Svg w={20} h={14} cls="ml-[21px]"><path d="M1 4h3l4-3v12l-4-3H1zM12 4l6 6M18 4l-6 6" stroke="#ccc" strokeWidth="1.500" /></Svg>
        <span className="ml-[19px]">ENG</span>
        <span className="ml-[14px] w-[74px] text-center leading-6">2:33 PM<br />5/23/2018</span>
        <span className="relative ml-5 w-[48px]">
          <Svg w={20} h={22}><path d="M0 0h20v17h-8l-5 5v-5H0z" fill="#ccc" /><path d="M3 5h14M3 9h14M3 13h8" stroke="#333" /></Svg>
          <span className="absolute top-[9px] left-[11px] flex size-5 items-center justify-center rounded-full border border-[#999] bg-[#333] text-sm font-bold">1</span>
        </span>
        <span className="h-[47px] w-px bg-[#666]" />
        <span className="w-[5px]" />
      </div>
    </div>
  );
}

/* ---------- Player ---------- */

function Player() {
  const btn = "flex h-[74px] w-[75px] items-center justify-center";
  return (
    <div className="absolute inset-x-0 bottom-0 flex h-[300px] flex-col justify-end bg-[linear-gradient(to_bottom,rgba(0,0,0,0)_0%,rgba(0,0,0,0.06)_12%,rgba(0,0,0,0.38)_46%,rgba(0,0,0,0.54)_80%,rgba(0,0,0,0.6)_100%)] pb-[21px]">
      <div className="flex px-9">
        <input
          type="range"
          aria-label="Seek"
          max={1000}
          defaultValue={893}
          className="h-[30px] w-full appearance-none bg-[linear-gradient(to_right,#68d5f5_87.9%,transparent_87.9%,transparent_89.4%,rgba(255,255,255,0.25)_89.4%)] bg-[length:100%_3px] bg-center bg-no-repeat [&::-webkit-slider-thumb]:size-[30px] [&::-webkit-slider-thumb]:appearance-none [&::-webkit-slider-thumb]:rounded-full [&::-webkit-slider-thumb]:border-3 [&::-webkit-slider-thumb]:border-[#68d5f5]"
        />
      </div>
      <div className="flex h-8 items-center justify-between px-9 text-base text-white">
        <span>0:05:50</span>
        <span>0:00:42</span>
      </div>
      <div className="grid grid-cols-[1fr_auto_1fr] px-9 text-white">
        <div className="flex">
          <button className={btn} aria-label="Volume">
            <Svg w={32} h={28}><path d="M1 9h5l6-6v22l-6-6H1zM16 10q3 4 0 8M20 6q6 8 0 16M24 2q10 12 0 24" stroke="#fff" strokeWidth="2" /></Svg>
          </button>
          <button className={btn} aria-label="Subtitles">
            <Svg w={30} h={28}><path d="M1 1h28v20H10l-5 6v-6H1zM4 14h22M4 18h22" stroke="#fff" strokeWidth="2" /></Svg>
          </button>
        </div>
        <div className="flex pl-1">
          <button className={btn} aria-label="Back 10 seconds">
            <Svg w={32} h={42} box="0 -6 32 42"><path d="M1 4v8h8M2 11C8-1 25-1 30 12" stroke="#fff" strokeWidth="2" /><text x="16" y="28" textAnchor="middle" fontSize="16" fill="#fff">10</text></Svg>
          </button>
          <button className={btn} aria-label="Play">
            <Svg w={20} h={26}><path d="M1 2l17 11L1 24z" stroke="#fff" strokeWidth="2" /></Svg>
          </button>
          <button className={btn} aria-label="Forward 30 seconds">
            <Svg w={32} h={42} box="0 -6 32 42"><path d="M31 4v8h-8M30 11C24-1 7-1 2 12" stroke="#fff" strokeWidth="2" /><text x="16" y="28" textAnchor="middle" fontSize="16" fill="#fff">30</text></Svg>
          </button>
        </div>
        <div className="flex justify-end">
          <button className={btn} aria-label="Draw">
            <Svg w={30} h={30}><path d="M1 29l3-8L22 3q3-3 6 0t0 6L9 27zM4 21l5 6M20 5l6 6" stroke="#fff" strokeWidth="2" /></Svg>
          </button>
          <button className={btn} aria-label="Mini view">
            <Svg w={30} h={20}><path d="M1 1h28v18H1z" stroke="#fff" strokeWidth="2" /><path d="M13 7h12v8H13z" stroke="#fff" strokeWidth="2.500" /><path d="M14 14l4-4 3 3 2-2" stroke="#fff" strokeWidth="1.500" /></Svg>
          </button>
          <button className={btn} aria-label="Full screen">
            <Svg w={28} h={28}><path d="M2 26L26 2M17 1h10v10M1 17v10h10" stroke="#fff" strokeWidth="2" /></Svg>
          </button>
          <button className={btn} aria-label="More">
            <Svg w={28} h={6}><g fill="#fff"><circle cx="3" cy="3" r="2" /><circle cx="14" cy="3" r="2" /><circle cx="25" cy="3" r="2" /></g></Svg>
          </button>
        </div>
      </div>
    </div>
  );
}

/* ---------- Desktop taskbar ---------- */

const APPS: { name: string; open?: boolean; active?: boolean; art: React.ReactNode }[] = [
  {
    name: "Microsoft Edge",
    art: (
      <Svg w={36} h={36}>
        <defs>
          <linearGradient id="edgeA" x1="0" y1="0" x2="1" y2="0.500"><stop offset="0" stopColor="#2aa6dd" /><stop offset="1" stopColor="#5fe06a" /></linearGradient>
        </defs>
        <path d="M0 17c0 11 8 19 18 19 7 0 12-3 15-8-4 1-9 1-12-1-4-2-4-6-3-10L12 8z" fill="#1577cf" />
        <path d="M0 17C1 7 8 0 18 0s18 8 18 15c0 6-5 9-10 9-4 0-6-2-5-4 4-5-1-11-8-11C6 9 1 13 0 17z" fill="url(#edgeA)" />
        <path d="M12 15c-6 8-1 19 10 20 5-1 9-4 11-7-8 3-16-1-16-8 0-4 3-5 3-5-2-3-6-2-8 0z" fill="#0f4f96" />
      </Svg>
    ),
  },
  {
    name: "File Explorer",
    open: true,
    art: (
      <Svg w={32} h={28}>
        <path d="M0 1h13l3 3h16v22H0z" fill="#e8a317" />
        <path d="M0 6h32v20H0z" fill="#fcd364" />
        <path d="M5 28V14h22v14h-5v-7H10v7z" fill="#3b93dc" />
      </Svg>
    ),
  },
  {
    name: "Mail",
    art: (
      <Svg w={36} h={34}>
        <path d="M0 12L18 0l18 12v4H0z" fill="#0f66b8" />
        <path d="M3 11h30v10H3z" fill="#fff" />
        <path d="M0 12l18 11L36 12v21H0z" fill="#39b4ee" />
        <path d="M0 33l36-21v21z" fill="#1c86d8" />
      </Svg>
    ),
  },
  {
    name: "Microsoft Store",
    art: (
      <Svg w={36} h={34}>
        <path d="M12 10V6c0-7 12-7 12 0v4" stroke="#fff" strokeWidth="2" />
        <path d="M0 9h36v23q0 2-2 2H2q-2 0-2-2z" fill="#fff" />
        <path d="M10 14h7v7h-7z" fill="#f25022" /><path d="M19 14h7v7h-7z" fill="#7fba00" />
        <path d="M10 22h7v7h-7z" fill="#00a4ef" /><path d="M19 22h7v7h-7z" fill="#ffb900" />
      </Svg>
    ),
  },
  {
    name: "Photoshop",
    art: <span className="mb-1 flex h-8 w-[34px] items-center justify-center border-2 border-[#8cc4f5] bg-[#06064e] text-lg font-semibold text-[#9dd0fb]">Ps</span>,
  },
  {
    name: "UniKey",
    art: (
      <Svg w={36} h={30} cls="ml-[2px]">
        <g fill="#f0e9ea" stroke="#b8b0b2"><rect x="1" y="1" width="16" height="15" rx="2" /><rect x="19" y="1" width="16" height="15" rx="2" /><rect x="10" y="14" width="17" height="15" rx="2" /></g>
        <g fill="#d8202a" fontSize="12" fontWeight="700" textAnchor="middle"><text x="9" y="12">u</text><text x="27" y="12">i</text><text x="18" y="25">n</text></g>
      </Svg>
    ),
  },
  { name: "Google Chrome", open: true, art: <Chrome w={34} h={34} /> },
  {
    name: "Media player",
    open: true,
    art: (
      <Svg w={36} h={34}>
        <defs><linearGradient id="mpl" x1="0" y1="0" x2="1" y2="1"><stop offset="0" stopColor="#f28a3c" /><stop offset="1" stopColor="#8a62d0" /></linearGradient></defs>
        <rect width="36" height="34" rx="1" fill="url(#mpl)" />
        <path d="M0 1h36v5H0z" fill="#e0714a" />
        <path d="M4 0l3 5M11 0l3 5M18 0l3 5M25 0l3 5M32 0l3 5" stroke="#7a2f2f" strokeWidth="2" />
        <path d="M3 6h30v25H3z" fill="#2b2830" />
        <path d="M14 11l12 8-12 8z" fill="#fff" />
      </Svg>
    ),
  },
  { name: "Visual Studio Code", open: true, art: <VsCode w={36} h={36} /> },
  {
    name: "Snipping Tool",
    open: true,
    art: (
      <Svg w={36} h={34}>
        <ellipse cx="15" cy="14" rx="14" ry="11" fill="#999" />
        <ellipse cx="17" cy="10" rx="14" ry="9" fill="#fff" stroke="#d8302a" strokeWidth="1.500" transform="rotate(-15 17 10)" />
        <path d="M10 15l10-9M15 4l6 16M20 8l2 12" stroke="#999" strokeWidth="1.500" />
        <ellipse cx="29" cy="22" rx="4.500" ry="3" stroke="#1f86d8" strokeWidth="2.500" transform="rotate(20 29 22)" />
        <ellipse cx="22" cy="28" rx="3" ry="5" stroke="#1f86d8" strokeWidth="2.500" transform="rotate(10 22 28)" />
      </Svg>
    ),
  },
  {
    name: "Photos",
    open: true,
    active: true,
    art: (
      <Svg w={36} h={34}>
        <path d="M5 7A17 16 0 0 1 34 14c3 11-6 19-16 19-5 0-10-2-13-6" stroke="#fff" strokeWidth="3" />
        <path d="M3 12c-3 5-2 11 1 15" stroke="#fff" strokeWidth="2" />
        <circle cx="10" cy="13" r="2" fill="#fff" />
        <path d="M5 28l11-11 4 4-8 10zM12 32l12-16 9 9c-3 6-12 10-21 7z" fill="#fff" />
      </Svg>
    ),
  },
];

function Taskbar() {
  return (
    <footer className="flex h-[60px] items-stretch bg-[#1d2b2f] text-white">
      <button className="flex w-[72px] items-center justify-center" aria-label="Start"><Windows w={24} h={24} c="#fff" /></button>
      <label className="flex w-[516px] items-center border-2 border-[#c3c3c3] bg-[#f1f1f1] pl-4">
        <Svg w={26} h={26}><circle cx="16" cy="9" r="7.500" stroke="#111" strokeWidth="2" /><path d="M11 15L1 25" stroke="#111" strokeWidth="2" /></Svg>
        <input aria-label="Search" placeholder="Type here to search" className="ml-4 w-80 pt-1 text-[20px] outline-none placeholder:text-[#3a3a3a]" />
      </label>
      <button className="flex w-[72px] items-center justify-center" aria-label="Cortana"><span className="size-6 rounded-full border-3 border-white" /></button>
      <button className="flex w-[72px] items-center justify-center" aria-label="Task view">
        <Svg w={24} h={24}><path d="M1 1v3h15V1M1 23v-3h15v3M1 7h15v10H1zM21 1v22" stroke="#fff" strokeWidth="1.500" /><path d="M19 8h4v4h-4z" fill="#fff" /></Svg>
      </button>
      <div className="ml-1 grid w-[799px] grid-cols-11">
        {APPS.map((a) => (
          <button
            key={a.name}
            aria-label={a.name}
            className={a.active ? "flex flex-col items-stretch bg-[#48575b]" : "flex flex-col items-stretch px-[7px]"}
          >
            <span className="flex flex-1 items-center justify-center">{a.art}</span>
            <span className={a.open ? "h-[3px] bg-[#a9e3f7]" : "h-[3px]"} />
          </button>
        ))}
      </div>
      <div className="ml-auto flex items-center">
        <Svg w={19} h={11}><path d="M1 10l8.500-8L18 10" stroke="#fff" strokeWidth="1.500" /></Svg>
        <Svg w={25} h={18} cls="ml-[14px]"><path d="M6 7h16v9H6zM23 9v4" stroke="#fff" strokeWidth="1.500" /><path d="M9 8h12v7H9z" fill="#fff" /><path d="M1 3h6v4H1zM2 0v3M6 0v3M4 7v6h3" stroke="#fff" strokeWidth="1.500" /></Svg>
        <Svg w={19} h={19} cls="ml-4"><path d="M1 18C1 9 9 1 18 1M5 18C5 11 11 5 18 5M9 18c0-5 4-9 9-9" stroke="#cfd6d8" strokeWidth="1.500" /><path d="M14 18c0-2 2-4 4-4v4z" fill="#fff" /></Svg>
        <Svg w={24} h={20} cls="ml-3"><path d="M1 7h3l5-5v16l-5-5H1zM12 7q2 3 0 6M15 4q5 6 0 12M19 2q6 8 0 16" stroke="#fff" strokeWidth="1.500" /></Svg>
        <span className="ml-[17px] text-base">ENG</span>
        <span className="ml-[18px] w-[84px] text-center text-[17px] leading-7 whitespace-nowrap">11:16 PM<br />6/19/2020</span>
        <Svg w={24} h={25} cls="ml-[30px]"><path d="M1 1h22v18h-6l-4 4-4-4H1z" stroke="#fff" strokeWidth="1.500" /></Svg>
        <span className="ml-[30px] h-[60px] w-px bg-[#7d888b]" />
        <span className="w-[7px]" />
      </div>
    </footer>
  );
}

/* ---------- Page ---------- */

export default function App() {
  return (
    <div className="flex h-screen flex-col overflow-hidden bg-black font-['Open_Sans','Noto_Sans',sans-serif]">
      <main className="relative flex min-h-0 flex-1">
        <div className="flex w-[194px] flex-col">
          <button className="flex h-12 w-[72px] items-center justify-center" aria-label="Back">
            <Svg w={18} h={18}><path d="M18 9H1M9 1L1 9l8 8" stroke="#fff" strokeWidth="1.800" /></Svg>
          </button>
          <button className="mt-[427px] flex h-[70px] w-11 items-center justify-center" aria-label="Previous">
            <Svg w={20} h={36}><path d="M19 1L2 18l17 17" stroke="#e8e8e8" strokeWidth="2" /></Svg>
          </button>
        </div>
        <div className="flex min-w-0 flex-1 flex-col bg-[#27569f]">
          <TitleBar />
          <MenuBar />
          <Ribbon />
          <Workspace />
          <DocTabs />
          <StatusBar />
          <RecordedTaskbar />
        </div>
        <div className="flex w-[196px] flex-col items-end pt-[475px]">
          <button className="flex h-[70px] w-11 items-center justify-center" aria-label="Next">
            <Svg w={20} h={36}><path d="M1 1l17 17L1 35" stroke="#e8e8e8" strokeWidth="2" /></Svg>
          </button>
        </div>
        <Player />
        <div className="absolute top-0 right-0 grid h-12 w-[207px] grid-cols-3 place-items-center bg-black pr-[2px]">
          <button aria-label="Minimize"><Svg w={15} h={2}><path d="M0 1h15" stroke="#fff" /></Svg></button>
          <button aria-label="Restore"><Svg w={16} h={16}><path d="M4 4V1h11v11h-3M1 4h11v11H1z" stroke="#fff" /></Svg></button>
          <button aria-label="Close"><Svg w={16} h={16}><path d="M1 1l14 14M15 1L1 15" stroke="#fff" strokeWidth="1.200" /></Svg></button>
        </div>
      </main>
      <Taskbar />
    </div>
  );
}
